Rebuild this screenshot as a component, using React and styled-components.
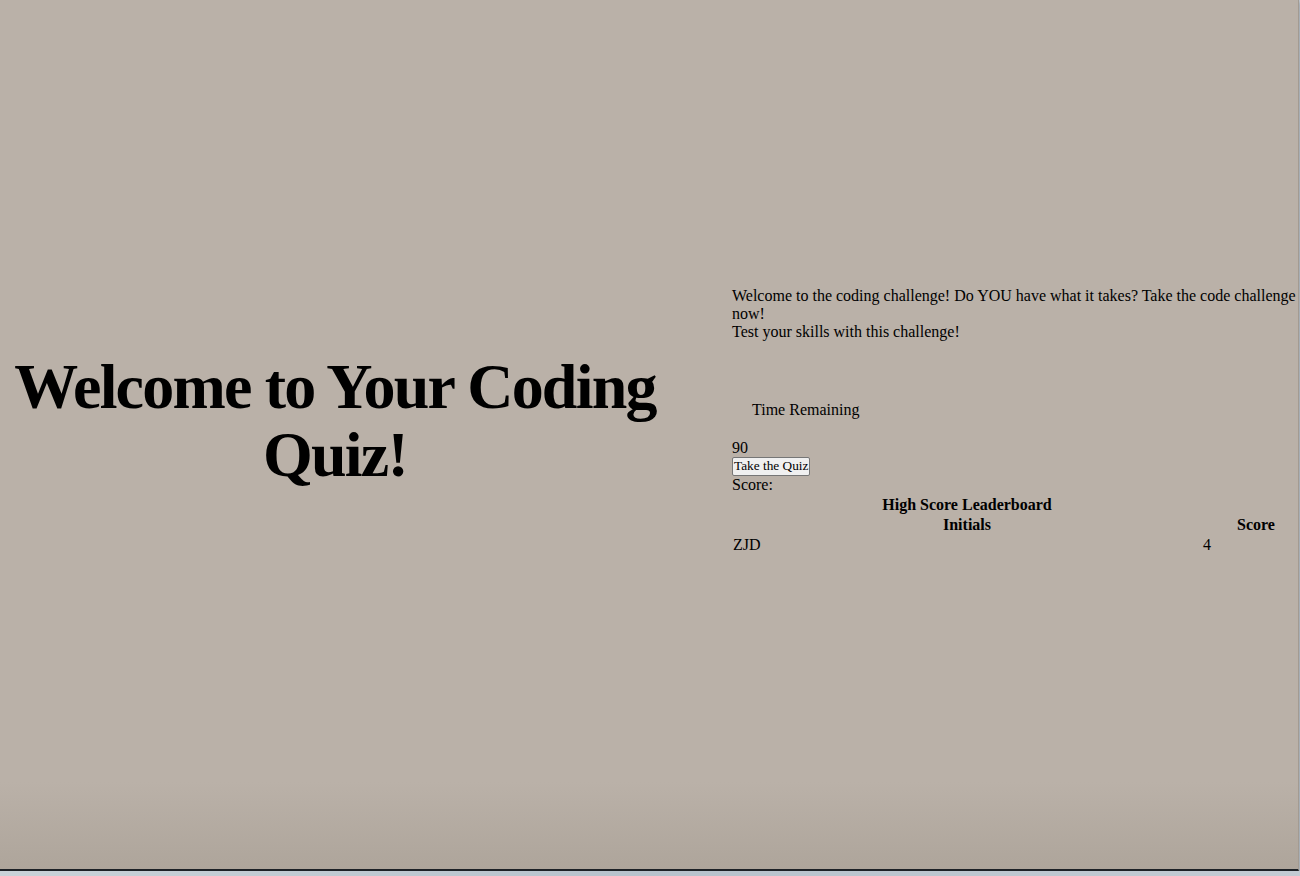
import React from "react";
import styled, { createGlobalStyle } from "styled-components";

const GlobalStyle = createGlobalStyle`
  html, body {
    margin: 0;
    padding: 0;
  }
  body {
    background: linear-gradient(90deg, #c9d2d8, #b7c2cc 50%, #c3cbd3);
    font-family: "Liberation Serif", "Times New Roman", serif;
    color: #000;
    overflow: hidden;
  }
`;

const Page = styled.div`
  box-sizing: border-box;
  width: 1299px;
  height: 871px;
  padding-bottom: 28px;
  display: flex;
  align-items: center;
  overflow: hidden;
  background: linear-gradient(
    180deg,
    #bab1a8 0%,
    #bab1a8 90%,
    #aea59b 100%
  );
  border-right: 1px solid #a39b92;
  border-bottom: 2px solid #1d2126;
  box-shadow: 0 2px 4px rgba(0, 0, 0, 0.35);
`;

const Hero = styled.div`
  width: 670px;
  flex-shrink: 0;
`;

const Title = styled.h1`
  margin: 0;
  font-size: 64px;
  line-height: 68px;
  letter-spacing: -1.8px;
  font-weight: 700;
  text-align: center;
`;

const Side = styled.div`
  margin-left: 62px;
  width: 567px;
  flex-shrink: 0;
  font-size: 16px;
  line-height: 18px;
`;

const Intro = styled.div`
  margin-bottom: 60px;
`;

const TimerLabel = styled.p`
  margin: 0 0 20px;
  padding-left: 20px;
`;

const StartButton = styled.button`
  display: block;
  box-sizing: border-box;
  height: 19px;
  font-family: "Liberation Serif", "Times New Roman", serif;
  font-size: 13.3px;
  line-height: 14px;
  padding: 0 1px;
  margin: 0;
  background: #f0f0f0;
  border: 1px solid #767676;
  border-radius: 2px;
  color: #000;
`;

const Board = styled.table`
  width: 578px;
  border-spacing: 0;
  margin-top: 1px;
`;

const Caption = styled.caption`
  font-weight: 700;
  line-height: 20px;
  padding-right: 108px;
`;

const Head = styled.th`
  padding: 1px;
  text-align: center;
  font-weight: 700;
`;

const Cell = styled.td`
  padding: 1px;
  text-align: left;
  width: ${(p) => (p.$wide ? "468px" : "auto")};
`;

const scores = [{ initials: "ZJD", score: 4 }];

export default function App() {
  return (
    <>
      <GlobalStyle />
      <Page>
        <Hero>
          <Title>Welcome to Your Coding Quiz!</Title>
        </Hero>
        <Side>
          <Intro>
            Welcome to the coding challenge! Do YOU have what it takes? Take the
            code challenge now!
            <br />
            Test your skills with this challenge!
          </Intro>
          <TimerLabel>Time Remaining</TimerLabel>
          <div>90</div>
          <StartButton>Take the Quiz</StartButton>
          <div>Score:</div>
          <Board>
            <Caption>High Score Leaderboard</Caption>
            <thead>
              <tr>
                <Head>Initials</Head>
                <Head>Score</Head>
              </tr>
            </thead>
            <tbody>
              {scores.map((s) => (
                <tr key={s.initials}>
                  <Cell $wide>{s.initials}</Cell>
                  <Cell>{s.score}</Cell>
                </tr>
              ))}
            </tbody>
          </Board>
        </Side>
      </Page>
    </>
  );
}
